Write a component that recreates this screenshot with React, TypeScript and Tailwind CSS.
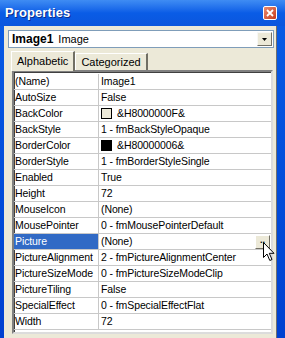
import React from "react";

type Row = {
  name: string;
  value: string;
  swatch?: string;
  selected?: boolean;
};

const ROWS: Row[] = [
  { name: "(Name)", value: "Image1" },
  { name: "AutoSize", value: "False" },
  { name: "BackColor", value: "&H8000000F&", swatch: "bg-[#ece9d8]" },
  { name: "BackStyle", value: "1 - fmBackStyleOpaque" },
  { name: "BorderColor", value: "&H80000006&", swatch: "bg-black" },
  { name: "BorderStyle", value: "1 - fmBorderStyleSingle" },
  { name: "Enabled", value: "True" },
  { name: "Height", value: "72" },
  { name: "MouseIcon", value: "(None)" },
  { name: "MousePointer", value: "0 - fmMousePointerDefault" },
  { name: "Picture", value: "(None)", selected: true },
  { name: "PictureAlignment", value: "2 - fmPictureAlignmentCenter" },
  { name: "PictureSizeMode", value: "0 - fmPictureSizeModeClip" },
  { name: "PictureTiling", value: "False" },
  { name: "SpecialEffect", value: "0 - fmSpecialEffectFlat" },
  { name: "Width", value: "72" },
];

const font = { fontFamily: '"Liberation Sans", Arial, sans-serif' };

function Cursor() {
  return (
    <svg width="13" height="20" viewBox="0 0 13 20" className="absolute left-[263px] top-[242px]">
      <path
        d="M0.5 0.5 L0.5 15.5 L4 12 L6.8 18.5 L9 17.5 L6.3 11.3 L11 11.3 Z"
        fill="white"
        stroke="black"
        strokeWidth="1"
        strokeLinejoin="miter"
      />
    </svg>
  );
}

export default function App() {
  return (
    <div
      className="relative w-[285px] h-[338px] overflow-hidden bg-gradient-to-b from-[#0a5ce6] to-[#0040d0] text-[10.5px] tracking-[-0.1px] text-black"
      style={font}
    >
      {/* title bar */}
      <div className="h-[26px] flex items-center justify-between pl-[5px] pr-[8px] bg-gradient-to-b from-[#3f8cf3] via-[#0a5ce6] to-[#0b56dd]">
        <span className="text-white font-bold text-[13px] tracking-[0.1px] [text-shadow:1px_1px_0_#0a2d8a]">
          Properties
        </span>
        <div className="w-[14px] h-[14px] rounded-[2px] border border-white bg-gradient-to-br from-[#e98a6d] to-[#c4391a] flex items-center justify-center">
          <svg width="8" height="8" viewBox="0 0 8 8">
            <path d="M1 1 L7 7 M7 1 L1 7" stroke="white" strokeWidth="1.8" />
          </svg>
        </div>
      </div>

      {/* body */}
      <div className="absolute left-[4px] top-[26px] w-[273px] h-[312px] bg-[#ece9d8] border-r border-[#6f6f6f]">
        {/* object combo */}
        <div className="ml-[4px] mr-[2px] mt-[4px] h-[18px] bg-white border border-[#7f9db9] flex items-center pl-[3px]">
          <span className="font-bold text-[12px] tracking-normal">Image1</span>
          <span className="ml-[5px] text-[11px] tracking-normal">Image</span>
          <div className="ml-auto mr-[1px] w-[15px] h-[14px] bg-[#ece9d8] border border-[#f8f8f6] border-r-[#716f64] border-b-[#716f64] flex items-center justify-center">
            <svg width="5" height="3" viewBox="0 0 5 3">
              <path d="M0 0 H5 L2.5 3 Z" fill="black" />
            </svg>
          </div>
        </div>

        {/* tabs */}
        <div className="flex items-end h-[22px] pl-[7px] text-[11px] tracking-normal">
          <div className="relative z-10 h-[20px] px-[5px] flex items-center bg-[#ece9d8] border-l border-t border-white border-r-2 border-r-[#716f64] -mb-[1px]">
            Alphabetic
          </div>
          <div className="h-[17px] px-[5px] flex items-center border-l border-t border-white border-r-2 border-r-[#716f64]">
            Categorized
          </div>
        </div>

        {/* grid */}
        <div className="ml-[8px] mr-[3px] h-[264px] bg-white border-2 border-[#808080] border-r-[#dcdcdc] border-b-[#dcdcdc] shadow-[inset_1px_1px_0_#404040]">
          <div className="pt-[2px]">
            {ROWS.map((r) => (
              <div key={r.name} className="relative flex h-[16px] border-b border-[#c8c8c8]">
                <div
                  className={
                    "w-[85px] shrink-0 pl-[1px] flex items-center border-r border-[#c8c8c8] whitespace-nowrap overflow-hidden " +
                    (r.selected ? "bg-[#316ac5] text-white" : "")
                  }
                >
                  {r.name}
                </div>
                <div className="flex-1 flex items-center pl-[2px] whitespace-nowrap overflow-hidden">
                  {r.swatch ? (
                    <span className={"w-[11px] h-[11px] border border-black mr-[5px] " + r.swatch} />
                  ) : null}
                  {r.value}
                  {r.selected ? (
                    <div className="ml-auto mr-[1px] w-[15px] h-[14px] bg-[#ece9d8] border border-white border-r-[#716f64] border-b-[#716f64] flex items-end justify-center pb-[3px] text-[9px] leading-none font-bold">
                      ..
                    </div>
                  ) : null}
                </div>
              </div>
            ))}
          </div>
        </div>
      </div>

      <Cursor />
    </div>
  );
}
